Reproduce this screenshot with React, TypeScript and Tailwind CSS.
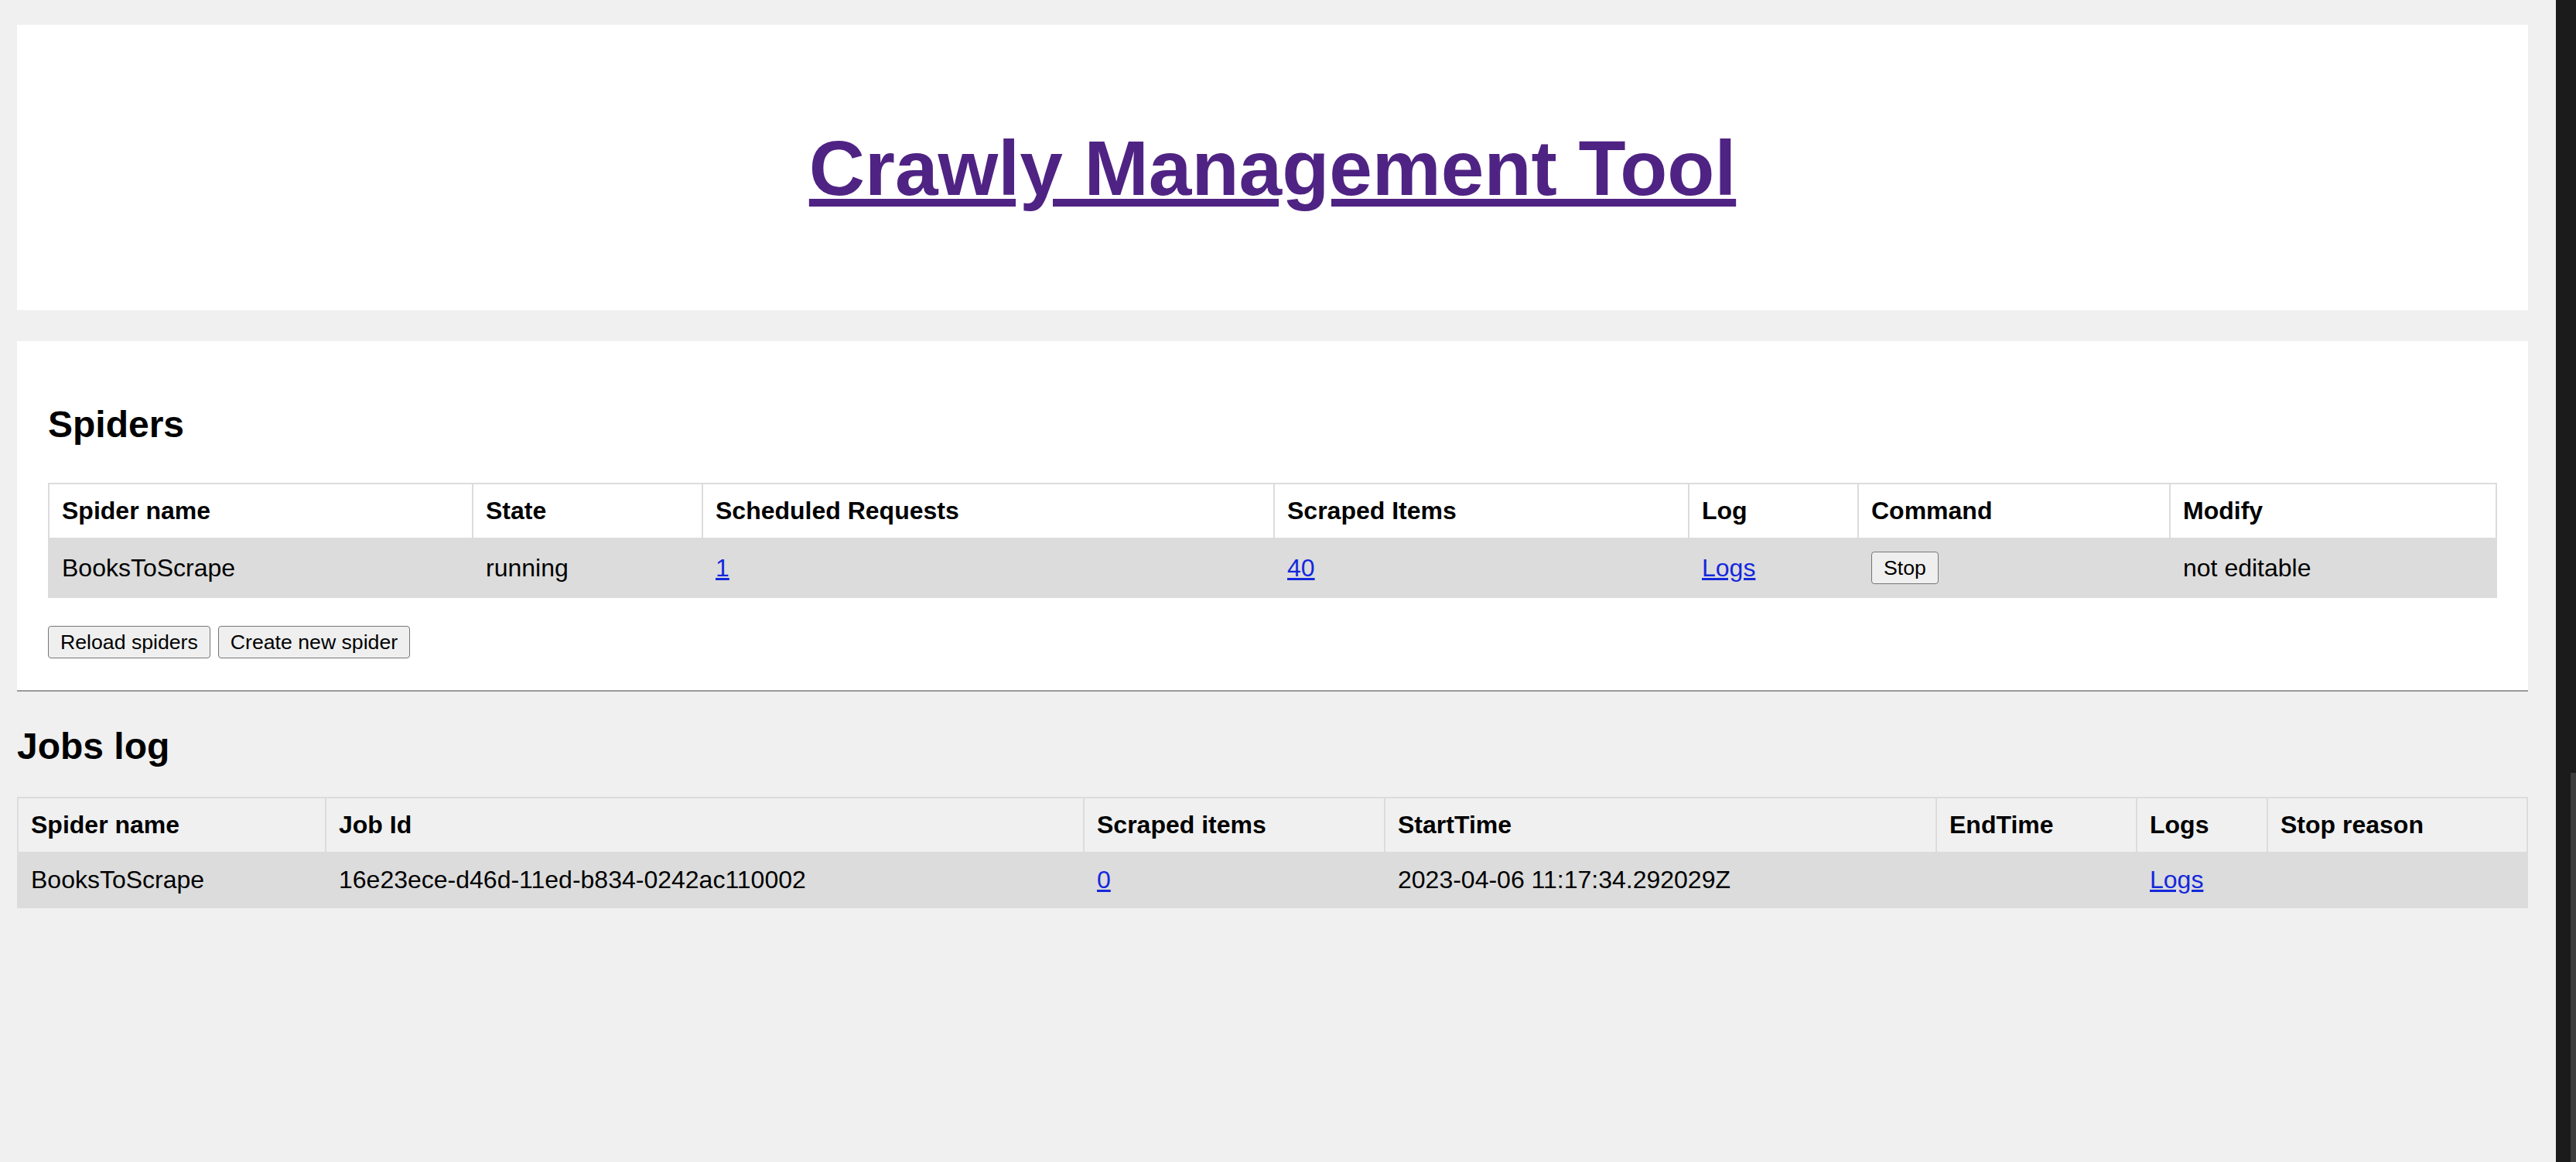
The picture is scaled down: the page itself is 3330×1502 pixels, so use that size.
import React from "react";

const spiderCols: { label: string; w: string }[] = [
  { label: "Spider name", w: "w-[548px]" },
  { label: "State", w: "w-[297px]" },
  { label: "Scheduled Requests", w: "w-[739px]" },
  { label: "Scraped Items", w: "w-[536px]" },
  { label: "Log", w: "w-[219px]" },
  { label: "Command", w: "w-[403px]" },
  { label: "Modify", w: "" },
];

const jobCols: { label: string; w: string }[] = [
  { label: "Spider name", w: "w-[398px]" },
  { label: "Job Id", w: "w-[980px]" },
  { label: "Scraped items", w: "w-[389px]" },
  { label: "StartTime", w: "w-[713px]" },
  { label: "EndTime", w: "w-[259px]" },
  { label: "Logs", w: "w-[169px]" },
  { label: "Stop reason", w: "" },
];

const cell = "border-2 border-[#dcdcdc] px-[16px] py-[16px] text-left align-middle text-[32px] leading-[37px]";
const link = "text-[#1428dc] underline";
const btn =
  "inline-flex h-[42px] items-center rounded-[4px] border border-[#767676] bg-[#efefef] px-[15px] text-[26.67px] leading-[31px] text-black";

export default function App() {
  return (
    <div className="flex min-h-screen w-full bg-[#f0f0f0] font-['Liberation_Sans',Arial,sans-serif] text-black">
      <main className="w-[3304px] shrink-0 pl-[22px] pr-[36px]">
        <header className="mt-[32px] h-[369px] bg-white pt-[128px] text-center">
          <h1 className="text-[100px] font-bold leading-[115px]">
            <a
              href="#"
              className="text-[#4f2383] underline decoration-[length:10px] underline-offset-[5px]"
            >
              Crawly Management Tool
            </a>
          </h1>
        </header>

        <section className="mt-[40px] border-b-2 border-[#9a9a9a] bg-white px-[40px] pb-[41px] pt-[40px]">
          <h2 className="mb-[48px] mt-[40px] text-[48px] font-bold leading-[55px]">Spiders</h2>
          <table className="w-full table-fixed border-collapse border-2 border-[#dcdcdc]">
            <thead>
              <tr className="bg-white">
                {spiderCols.map((c) => (
                  <th key={c.label} className={`${cell} ${c.w} font-bold`}>
                    {c.label}
                  </th>
                ))}
              </tr>
            </thead>
            <tbody>
              <tr className="bg-[#dcdcdc]">
                <td className={cell}>BooksToScrape</td>
                <td className={cell}>running</td>
                <td className={cell}>
                  <a href="#" className={link}>1</a>
                </td>
                <td className={cell}>
                  <a href="#" className={link}>40</a>
                </td>
                <td className={cell}>
                  <a href="#" className={link}>Logs</a>
                </td>
                <td className={cell}>
                  <button type="button" className={btn}>Stop</button>
                </td>
                <td className={cell}>not editable</td>
              </tr>
            </tbody>
          </table>
          <div className="mt-[36px] flex gap-[10px]">
            <button type="button" className={btn}>Reload spiders</button>
            <button type="button" className={btn}>Create new spider</button>
          </div>
        </section>

        <h2 className="mb-[38px] mt-[43px] text-[48px] font-bold leading-[55px]">Jobs log</h2>
        <table className="w-full table-fixed border-collapse border-2 border-[#dcdcdc]">
          <thead>
            <tr>
              {jobCols.map((c) => (
                <th key={c.label} className={`${cell} ${c.w} font-bold`}>
                  {c.label}
                </th>
              ))}
            </tr>
          </thead>
          <tbody>
            <tr className="bg-[#dcdcdc]">
              <td className={cell}>BooksToScrape</td>
              <td className={cell}>16e23ece-d46d-11ed-b834-0242ac110002</td>
              <td className={cell}>
                <a href="#" className={link}>0</a>
              </td>
              <td className={cell}>2023-04-06 11:17:34.292029Z</td>
              <td className={cell}></td>
              <td className={cell}>
                <a href="#" className={link}>Logs</a>
              </td>
              <td className={cell}></td>
            </tr>
          </tbody>
        </table>
      </main>
      <aside className="flex w-[26px] shrink-0 flex-col justify-end bg-[#1b1b1b]">
        <div className="ml-auto h-[503px] w-[7px] bg-[#3c3c3c]" />
      </aside>
    </div>
  );
}
